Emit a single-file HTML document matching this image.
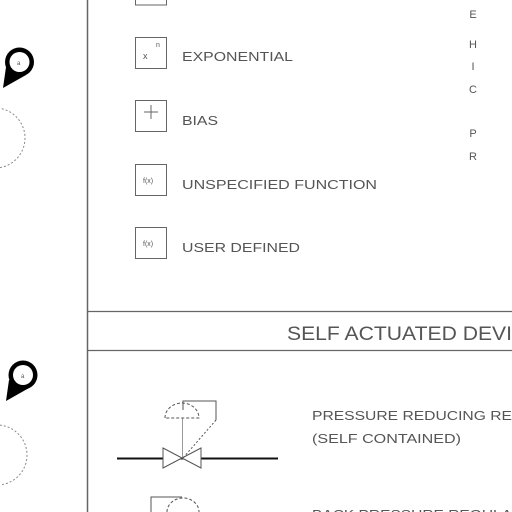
<!DOCTYPE html>
<html><head><style>body{margin:0;background:#fff}svg{display:block}text{font-family:"Liberation Sans",sans-serif;fill:#555}</style></head><body>
<svg width="512" height="512" viewBox="0 0 512 512">
<g stroke="#666" fill="none">
<line x1="87.5" y1="0" x2="87.5" y2="512" stroke-width="1.5"/>
<line x1="87" y1="311.5" x2="512" y2="311.5" stroke-width="1.2"/>
<line x1="87" y1="350.5" x2="512" y2="350.5" stroke-width="1.2"/>
<rect x="135.5" y="-10" width="31" height="15"/>
<rect x="135.5" y="37.5" width="31" height="31"/>
<rect x="135.5" y="100.5" width="31" height="31"/>
<rect x="135.5" y="164.5" width="31" height="31"/>
<rect x="135.5" y="227.5" width="31" height="31"/>
<line x1="151" y1="105" x2="151" y2="119"/><line x1="144" y1="112" x2="158" y2="112"/>
<circle cx="-5" cy="138" r="30" stroke-dasharray="2,2" stroke="#888"/>
<circle cx="-3" cy="455" r="30" stroke-dasharray="2,2" stroke="#888"/>
</g>
<g fill="#000">
<circle cx="19.5" cy="62" r="14.5"/><path d="M3 88 L6 67 L26 75 Z"/>
<circle cx="23" cy="375" r="14.5"/><path d="M6 401 L9 380 L29 388 Z"/>
</g>
<g fill="#fff"><circle cx="19.5" cy="62" r="10"/><circle cx="23" cy="375" r="10"/></g>
<text x="17" y="65" font-size="6">a</text><text x="21" y="378" font-size="6">a</text>
<text x="143" y="59" font-size="9">x</text><text x="156" y="47" font-size="7">n</text>
<text x="143" y="183" font-size="7">f(x)</text><text x="143" y="246" font-size="7">f(x)</text>
<g font-size="13">
<text x="182" y="61" textLength="111" lengthAdjust="spacingAndGlyphs">EXPONENTIAL</text>
<text x="182" y="125" textLength="36" lengthAdjust="spacingAndGlyphs">BIAS</text>
<text x="182" y="189" textLength="195" lengthAdjust="spacingAndGlyphs">UNSPECIFIED FUNCTION</text>
<text x="182" y="252" textLength="118" lengthAdjust="spacingAndGlyphs">USER DEFINED</text>
<text x="312" y="420" textLength="200" lengthAdjust="spacingAndGlyphs">PRESSURE REDUCING RE</text>
<text x="312" y="443" textLength="149" lengthAdjust="spacingAndGlyphs">(SELF CONTAINED)</text>
<text x="312" y="519" textLength="200" lengthAdjust="spacingAndGlyphs">BACK PRESSURE REGULA</text>
</g>
<g font-size="11" text-anchor="middle">
<text x="473" y="18">E</text><text x="473" y="48">H</text><text x="473" y="70">I</text><text x="473" y="93">C</text><text x="473" y="137">P</text><text x="473" y="160">R</text>
</g>
<text x="287" y="340" font-size="19" textLength="225" lengthAdjust="spacingAndGlyphs" fill="#333">SELF ACTUATED DEVI</text>
<g stroke="#555" fill="none">
<line x1="117" y1="458.5" x2="278" y2="458.5" stroke="#111" stroke-width="2"/>
<path d="M163 448 V468 L201 448 V468 Z" fill="#fff"/>
<line x1="182.5" y1="418" x2="182.5" y2="457" stroke="#999"/>
<path d="M165 418 A17 15 0 0 1 199 418 Z" stroke-dasharray="3,2"/>
<path d="M183 410 V401 H216 V420"/>
<path d="M216 420 L183 458" stroke-dasharray="2,2"/>
<path d="M151 512 V497 H182"/>
<path d="M167 512 A16 14 0 0 1 199 512" stroke-dasharray="3,2"/>
</g>
</svg>
</body></html>
